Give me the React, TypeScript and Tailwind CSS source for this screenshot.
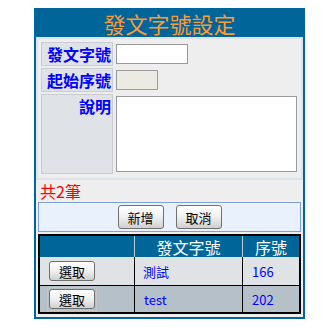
import React from "react";

const font = { fontFamily: '"Noto Sans CJK TC", "Noto Sans", sans-serif' };

function Btn({ children, ring }: { children: React.ReactNode; ring?: boolean }) {
  return (
    <div className={ring ? "p-[1px] border border-[#c8c8c8]" : ""}>
      <button className="w-[46px] h-[20px] flex items-center justify-center rounded-[3px] border border-[#707070] bg-linear-to-b from-white via-[#f0f0f0] to-[#cfcfcf] text-[13px] leading-none text-black">
        {children}
      </button>
    </div>
  );
}

export default function App() {
  return (
    <div className="bg-white w-[331px] h-[335px] pl-[34px] pt-[8px]" style={font}>
      <div className="w-[271px] bg-[#006699] px-[2px] pb-[2px]">
        <div className="h-[29px] flex items-center justify-center text-[22px] leading-none text-[#ff9933]">
          發文字號設定
        </div>
        <div className="bg-[#eeeeee] pb-[3px]">
          {/* form */}
          <div className="border-2 border-[#dde3e8] pl-[3px] pr-[4px] pt-[3px] pb-[4px] flex flex-col gap-[2px]">
            <div className="flex h-[24px] items-center">
              <div className="w-[72px] h-full bg-[#dfe3e7] border border-[#c9cdd1] flex items-center justify-end pr-[1px] text-[16px] font-bold text-[#0000ff] leading-none">
                發文字號
              </div>
              <div className="ml-[3px] w-[72px] h-[20px] bg-white border border-[#999999]" />
            </div>
            <div className="flex h-[24px] items-center">
              <div className="w-[72px] h-full bg-[#dfe3e7] border border-[#c9cdd1] flex items-center justify-end pr-[1px] text-[16px] font-bold text-[#0000ff] leading-none">
                起始序號
              </div>
              <div className="ml-[3px] w-[42px] h-[20px] bg-[#ebebe4] border border-[#999999]" />
            </div>
            <div className="flex h-[80px] items-center">
              <div className="w-[72px] h-full bg-[#dfe3e7] border border-[#c9cdd1] flex items-start justify-end pr-[1px] pt-[3px] text-[16px] font-bold text-[#0000ff] leading-none">
                說明
              </div>
              <div className="ml-[3px] flex-1 h-[76px] bg-white border border-[#999999]" />
            </div>
          </div>
          {/* count */}
          <div className="h-[22px] flex items-center pl-[4px] text-[16px] leading-none text-[#ff0000]">
            共2筆
          </div>
          {/* buttons bar */}
          <div className="mx-[2px] h-[30px] border border-[#7f9fcf] bg-[#e8f1fc] flex items-center justify-center gap-[12px]">
            <div className="h-[24px]">
              <button className="w-[46px] h-[24px] flex items-center justify-center rounded-[3px] border border-[#707070] bg-linear-to-b from-white via-[#f0f0f0] to-[#cfcfcf] text-[13px] leading-none text-black">
                新增
              </button>
            </div>
            <button className="w-[46px] h-[24px] flex items-center justify-center rounded-[3px] border border-[#707070] bg-linear-to-b from-white via-[#f0f0f0] to-[#cfcfcf] text-[13px] leading-none text-black">
              取消
            </button>
          </div>
          {/* data table */}
          <div className="mx-[2px] mt-[2px] border-2 border-black">
            <div className="grid grid-cols-[94px_108px_57px] h-[21px] bg-[#006699] text-white text-[16px] leading-none">
              <div />
              <div className="border-l border-[#c0c8d0] flex items-center justify-center">發文字號</div>
              <div className="border-l border-[#c0c8d0] flex items-center justify-center">序號</div>
            </div>
            <div className="grid grid-cols-[94px_108px_57px] h-[28px] bg-[#dfe3e6] text-[13px] leading-none text-[#0000ff]">
              <div className="flex items-center pl-[9px]">
                <Btn>選取</Btn>
              </div>
              <div className="border-l border-black flex items-center pl-[8px]">測試</div>
              <div className="border-l border-black flex items-center pl-[9px]">166</div>
            </div>
            <div className="grid grid-cols-[94px_108px_57px] h-[27px] bg-[#b6c0c8] border-t border-black text-[13px] leading-none text-[#0000ff]">
              <div className="flex items-center pl-[7px]">
                <Btn ring>選取</Btn>
              </div>
              <div className="border-l border-black flex items-center pl-[9px]">test</div>
              <div className="border-l border-black flex items-center pl-[9px]">202</div>
            </div>
          </div>
        </div>
      </div>
    </div>
  );
}
